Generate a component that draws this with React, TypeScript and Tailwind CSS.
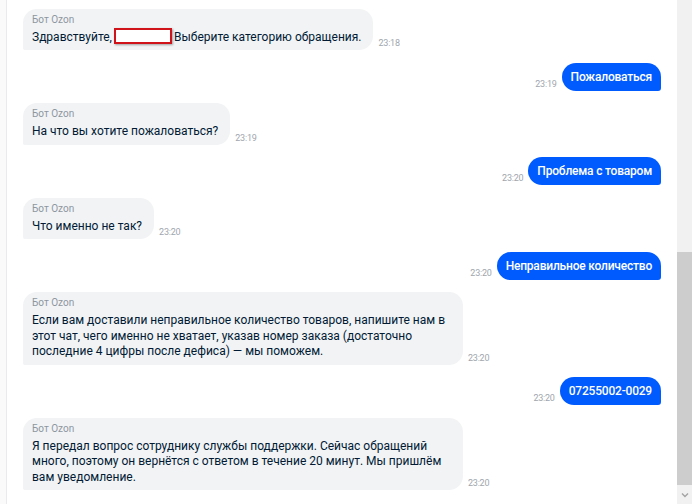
import React from "react";

type Msg = { from: "bot" | "me"; text: React.ReactNode; time: string };

const messages: Msg[] = [
  {
    from: "bot",
    text: (
      <>
        Здравствуйте,
        <span className="inline-block align-middle w-[58px] h-[16px] mx-[2px] -mt-[3px] bg-white border-2 border-[#d0121b] shadow-[1px_1px_2px_rgba(0,0,0,0.35)]" />
        Выберите категорию обращения.
      </>
    ),
    time: "23:18",
  },
  { from: "me", text: "Пожаловаться", time: "23:19" },
  { from: "bot", text: "На что вы хотите пожаловаться?", time: "23:19" },
  { from: "me", text: "Проблема с товаром", time: "23:20" },
  { from: "bot", text: "Что именно не так?", time: "23:20" },
  { from: "me", text: "Неправильное количество", time: "23:20" },
  {
    from: "bot",
    text: "Если вам доставили неправильное количество товаров, напишите нам в этот чат, чего именно не хватает, указав номер заказа (достаточно последние 4 цифры после дефиса) — мы поможем.",
    time: "23:20",
  },
  { from: "me", text: "07255002-0029", time: "23:20" },
  {
    from: "bot",
    text: "Я передал вопрос сотруднику службы поддержки. Сейчас обращений много, поэтому он вернётся с ответом в течение 20 минут. Мы пришлём вам уведомление.",
    time: "23:20",
  },
];

const Time = ({ t }: { t: string }) => (
  <span className="text-[9px] leading-none text-[#a0a6ad] mb-[2px] tracking-tight">{t}</span>
);

const BotBubble = ({ m }: { m: Msg }) => (
  <div className="flex flex-row items-end gap-[5px]">
    <div className="max-w-[440px] bg-[#f2f3f5] rounded-[14px] rounded-bl-[2px] pl-[9px] pr-[12px] pt-[5px] pb-[5px]">
      <div className="text-[10px] leading-[12px] text-[#8d96a0] mb-[4px]">Бот Ozon</div>
      <div className="text-[12px] leading-[15.5px] text-[#001a34]">{m.text}</div>
    </div>
    <Time t={m.time} />
  </div>
);

const MyBubble = ({ m }: { m: Msg }) => (
  <div className="flex flex-row items-end justify-end gap-[5px]">
    <Time t={m.time} />
    <div className="bg-[#005bff] text-white rounded-[14px] rounded-br-[3px] h-[28px] px-[9px] flex items-center text-[12px] font-medium tracking-[-0.2px]">
      {m.text}
    </div>
  </div>
);

export default function App() {
  return (
    <div
      className="w-[700px] h-[504px] flex flex-row bg-white overflow-hidden"
      style={{ fontFamily: "Roboto, 'Noto Sans', sans-serif" }}
    >
      <div className="w-[7px] bg-[#fafafa] border-r border-[#e9eaec]" />
      <div className="flex-1 h-full flex flex-col justify-end gap-[12.5px] overflow-hidden pl-[16px] pr-[16px] pb-[14px]">
        {/* tail of an earlier bot message, scrolled out of view */}
        <div className="shrink-0 w-[156px] h-[42px] bg-[#f2f3f5] rounded-[14px] rounded-bl-[2px]" />
        {messages.map((m, i) =>
          m.from === "bot" ? <BotBubble key={i} m={m} /> : <MyBubble key={i} m={m} />
        )}
      </div>
      <div className="w-[15px] h-full flex flex-col bg-[#f1f1f1]">
        <div className="h-[252px]" />
        <div className="h-[233px] bg-[#cdcdcd]" />
        <div className="flex-1 flex items-center justify-center">
          <svg width="8" height="6" viewBox="0 0 8 6">
            <path d="M1 1.5 L4 4.5 L7 1.5" fill="none" stroke="#a3a3a3" strokeWidth="1.4" />
          </svg>
        </div>
      </div>
      <div className="w-[8px] bg-white" />
    </div>
  );
}
